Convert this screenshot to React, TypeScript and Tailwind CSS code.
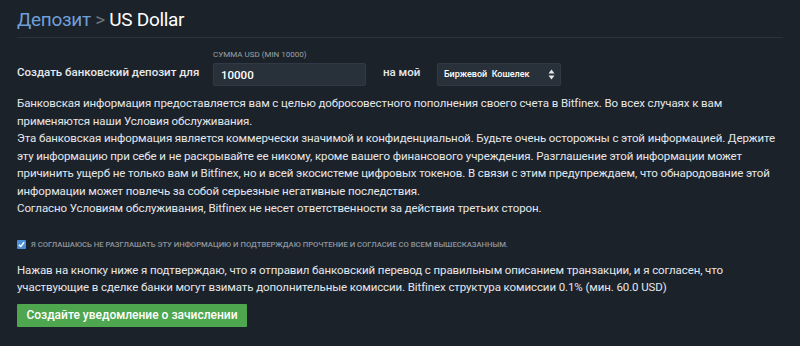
export default function App() {
  return (
    <div className="min-h-[346px] w-[800px] bg-[#1c222a] px-[17px] pt-[8px] font-['Roboto',sans-serif] text-[#e6e8ea]">
      <h1 className="border-b border-[#2b333c] pb-[5px] text-[19px] leading-[24px] tracking-[-0.3px]">
        <span className="text-[#6f9fd8]">Депозит</span>
        <span className="text-[#6c747c]"> &gt; </span>
        <span className="text-white">US Dollar</span>
      </h1>

      <div className="mt-[12px] flex items-end">
        <div className="w-[196px] whitespace-nowrap pb-[5px] text-[11.5px] font-medium">Создать банковский депозит для</div>
        <div className="flex flex-col">
          <span className="mb-[4px] text-[8px] leading-[9px] text-[#9aa2aa]">СУММА USD (MIN 10000)</span>
          <input
            defaultValue="10000"
            className="h-[23px] w-[153px] rounded-[2px] border border-[#313a44] bg-[#28313a] px-[7px] text-[11.5px] font-medium text-white outline-none"
          />
        </div>
        <div className="w-[71px] whitespace-nowrap pb-[5px] pl-[17px] text-[11.5px] font-medium">на мой</div>
        <div className="flex h-[23px] w-[124px] items-center justify-between rounded-[2px] border border-[#313a44] bg-[#28313a] pl-[6px] pr-[5px] text-[9px] font-medium text-white">
          <span className="whitespace-pre">Биржевой  Кошелек</span>
          <svg width="7" height="11" viewBox="0 0 7 11">
            <path d="M3.5 0.5 L6.5 4.5 H0.5 Z M3.5 10.5 L6.5 6.5 H0.5 Z" fill="#e6e8ea" />
          </svg>
        </div>
      </div>

      <div className="mt-[9px] text-[11.5px] leading-[17.5px] tracking-[-0.1px] text-[#e4e7ea]">
        <p>
          Банковская информация предоставляется вам с целью добросовестного пополнения своего счета в Bitfinex. Во всех случаях к вам
          <br />
          применяются наши Условия обслуживания.
        </p>
        <p>
          Эта банковская информация является коммерчески значимой и конфиденциальной. Будьте очень осторожны с этой информацией. Держите
          <br />
          эту информацию при себе и не раскрывайте ее никому, кроме вашего финансового учреждения. Разглашение этой информации может
          <br />
          причинить ущерб не только вам и Bitfinex, но и всей экосистеме цифровых токенов. В связи с этим предупреждаем, что обнародование этой
          <br />
          информации может повлечь за собой серьезные негативные последствия.
        </p>
        <p>Согласно Условиям обслуживания, Bitfinex не несет ответственности за действия третьих сторон.</p>
      </div>

      <label className="mt-[21px] flex h-[12px] items-center gap-[5px]">
        <span className="flex h-[9px] w-[9px] items-center justify-center rounded-[1px] bg-[#4a90d9]">
          <svg width="7" height="7" viewBox="0 0 8 8">
            <path d="M1 4.2 L3.1 6.2 L7 1.5" stroke="white" strokeWidth="1.6" fill="none" />
          </svg>
        </span>
        <span className="whitespace-nowrap text-[7.7px] font-medium uppercase text-[#8e969e]">
          Я соглашаюсь не разглашать эту информацию и подтверждаю прочтение и согласие со всем вышесказанным.
        </span>
      </label>

      <p className="mt-[11px] text-[11.5px] leading-[17.5px] tracking-[-0.1px] text-[#e4e7ea]">
        Нажав на кнопку ниже я подтверждаю, что я отправил банковский перевод с правильным описанием транзакции, и я согласен, что
        <br />
        участвующие в сделке банки могут взимать дополнительные комиссии. Bitfinex структура комиссии 0.1% (мин. 60.0 USD)
      </p>

      <button className="mt-[7px] h-[23px] w-[230px] rounded-[1px] bg-[#4ea64f] text-[12px] font-medium text-white">
        Создайте уведомление о зачислении
      </button>
    </div>
  );
}
